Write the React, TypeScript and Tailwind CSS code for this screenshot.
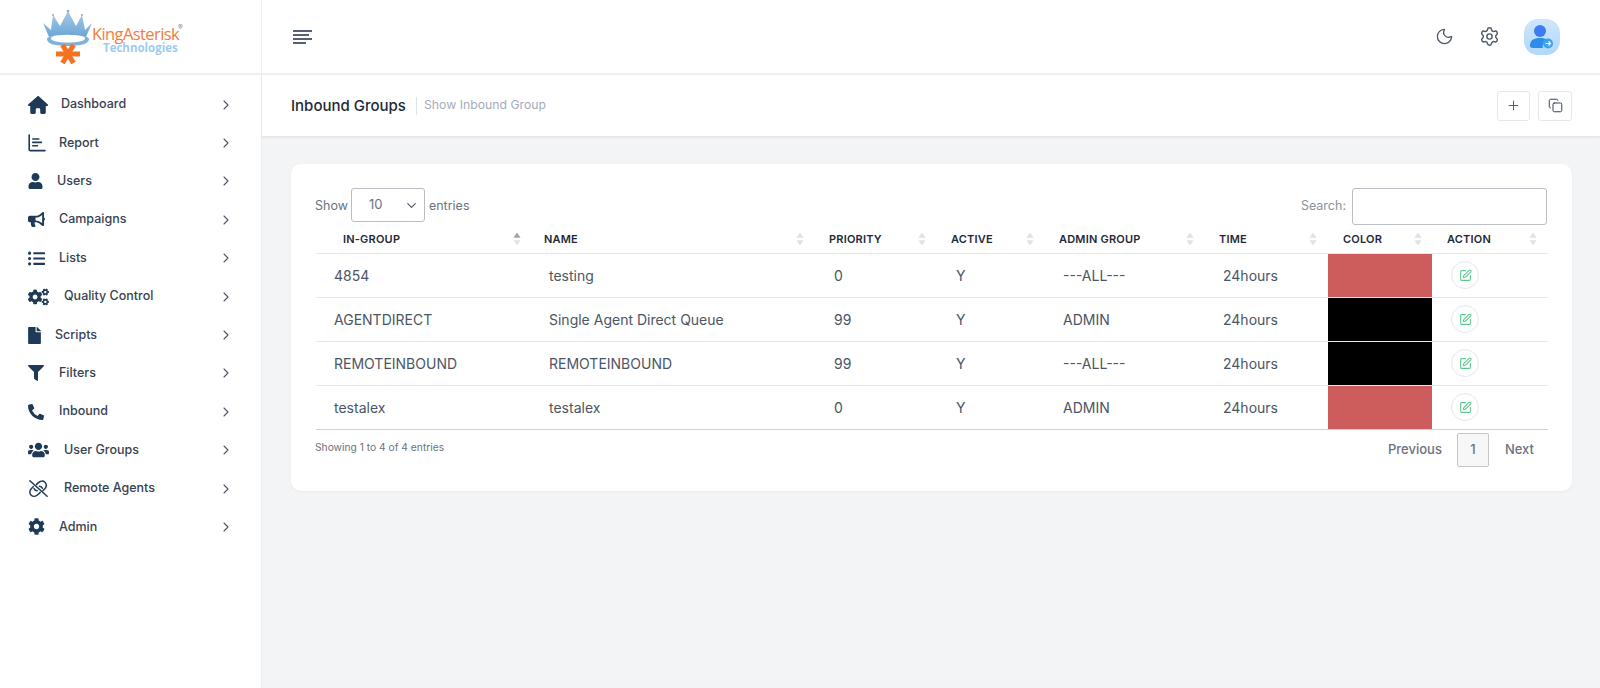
import React from "react";
import { ChevronRight, ChevronDown, Moon, Settings, Plus, Copy, SquarePen } from "lucide-react";
import { FaUser, FaBullhorn, FaListUl, FaCogs, FaFile, FaFilter, FaPhoneAlt, FaUsers, FaCog } from "react-icons/fa";
import { FaHouse } from "react-icons/fa6";

const ReportIcon = ({ className }: { className?: string }) => (
  <svg viewBox="0 0 18 18" className={className} fill="none" stroke="currentColor" strokeWidth="1.6" strokeLinecap="round">
    <path d="M1.2 1v14.6c0 .6.4 1 1 1H17" />
    <path d="M4.8 5h6M4.8 8.4h8.6M4.8 11.8h4.6" />
  </svg>
);

const UnlinkIcon = ({ className }: { className?: string }) => (
  <svg viewBox="0 0 24 22" className={className} fill="none" stroke="currentColor" strokeWidth="1.7" strokeLinecap="round">
    <path d="M2 2l20 18" />
    <path d="M9.5 6.5l2-2c2.4-2.4 5.8-2.8 8-.8s2 5.4-.4 7.8l-2 2" />
    <path d="M13 8.5c1.6 0 3 1 3.6 2.4" />
    <path d="M14 15.5l-2.5 2.5c-2.4 2.4-5.8 2.8-8 .8s-2-5.4.4-7.8l2.2-2.2" />
    <path d="M10.5 13.5c-1.6 0-3-1-3.6-2.4" />
  </svg>
);

const items = [
  { label: "Dashboard", Icon: FaHouse, icon: "w-[20px] h-[18px]", w: "w-[33px]" },
  { label: "Report", Icon: ReportIcon, icon: "w-[18px] h-[18px]", w: "w-[31px]" },
  { label: "Users", Icon: FaUser, icon: "w-[15px] h-[16px]", w: "w-[29px]" },
  { label: "Campaigns", Icon: FaBullhorn, icon: "w-[17px] h-[17px]", w: "w-[31px]" },
  { label: "Lists", Icon: FaListUl, icon: "w-[17px] h-[17px]", w: "w-[31px]" },
  { label: "Quality Control", Icon: FaCogs, icon: "w-[21px] h-[18px]", w: "w-[36px]" },
  { label: "Scripts", Icon: FaFile, icon: "w-[13px] h-[17px]", w: "w-[27px]" },
  { label: "Filters", Icon: FaFilter, icon: "w-[16px] h-[16px]", w: "w-[31px]" },
  { label: "Inbound", Icon: FaPhoneAlt, icon: "w-[16px] h-[16px]", w: "w-[31px]" },
  { label: "User Groups", Icon: FaUsers, icon: "w-[21px] h-[18px]", w: "w-[36px]" },
  { label: "Remote Agents", Icon: UnlinkIcon, icon: "w-[21px] h-[19px]", w: "w-[36px]" },
  { label: "Admin", Icon: FaCog, icon: "w-[17px] h-[17px]", w: "w-[31px]" },
];

const Sort = ({ active }: { active?: boolean }) => (
  <svg viewBox="0 0 8 14" className="w-[8px] h-[14px] shrink-0">
    <path d="M4 0.5l3.6 5.2H0.4z" fill={active ? "#9ca3af" : "#dfe2e6"} />
    <path d="M4 13.5l3.6-5.2H0.4z" fill="#dfe2e6" />
  </svg>
);

const headers = [
  { t: "IN-GROUP", c: "pl-[27px] pr-[9px]", active: true },
  { t: "NAME", c: "pl-[14px] pr-[11px]" },
  { t: "PRIORITY", c: "pl-[14px] pr-[11px]" },
  { t: "ACTIVE", c: "pl-[14px] pr-[11px]" },
  { t: "ADMIN GROUP", c: "pl-[14px] pr-[11px]" },
  { t: "TIME", c: "pl-[14px] pr-[11px]" },
  { t: "COLOR", c: "pl-[15px] pr-[10px]" },
  { t: "ACTION", c: "pl-[15px] pr-[11px]" },
];

const rows = [
  ["4854", "testing", "0", "Y", "---ALL---", "24hours", "bg-[#cd5c5c]"],
  ["AGENTDIRECT", "Single Agent Direct Queue", "99", "Y", "ADMIN", "24hours", "bg-black"],
  ["REMOTEINBOUND", "REMOTEINBOUND", "99", "Y", "---ALL---", "24hours", "bg-black"],
  ["testalex", "testalex", "0", "Y", "ADMIN", "24hours", "bg-[#cd5c5c]"],
];

export default function App() {
  return (
    <div className="flex min-h-[688px] h-[688px] w-full overflow-hidden bg-[#f3f4f6] text-[#4b5563] font-['Inter',sans-serif]">
      <aside className="w-[262px] shrink-0 bg-white border-r border-[#eceef1] flex flex-col">
        <div className="h-[75px] shrink-0 border-b-2 border-[#eef0f2] flex items-start pl-[43px] pt-[10px]">
          <svg viewBox="0 0 50 54" className="w-[50px] h-[54px] shrink-0">
            <defs>
              <linearGradient id="cr" x1="0" y1="0" x2="0" y2="1">
                <stop offset="0" stopColor="#a9cbe6" />
                <stop offset="1" stopColor="#6aa6d6" />
              </linearGradient>
            </defs>
            <path d="M0 13l8 7 2-15 7 11 8-15 8 15 6-11 3 15 7-7-6 14c-11-3-27-3-37 0z" fill="url(#cr)" />
            <circle cx="25" cy="1" r="1.4" fill="#7fb1d9" />
            <circle cx="10" cy="5" r="1" fill="#7fb1d9" />
            <circle cx="39" cy="5" r="1" fill="#7fb1d9" />
            <path d="M4 29c0 5 9 7 21 7s21-2 21-7c0-2-4-3-7-3 2 .6 3 1.400 3 2.400 0 2.600-8 4-17 4s-17-1.400-17-4c0-1 1-1.800 3-2.400-3 0-7 1-7 3z" fill="#7fb1d9" />
            <g stroke="#f4711f" strokeWidth="5">
              <path d="M13 44h24" />
              <path d="M19.500 35l11 18" />
              <path d="M30.500 35l-11 18" />
            </g>
          </svg>
          <div className="flex flex-col mt-[15px] -ml-[1px] w-[92px] leading-none">
            <div className="flex items-start">
              <span className="text-[16.5px] leading-[18px] font-medium text-[#f47c3c] tracking-[-0.6px] whitespace-nowrap font-['Open_Sans',sans-serif]">KingAsterisk</span>
              <span className="text-[7px] leading-[8px] text-[#888] -ml-[1px] -mt-[1px]">®</span>
            </div>
            <span className="text-[11.5px] leading-[12px] font-bold text-[#9ccbef] pl-[11px] -mt-[1px] whitespace-nowrap font-['Open_Sans',sans-serif]">Technologies</span>
          </div>
        </div>
        <nav className="pt-[10.5px] flex flex-col">
          {items.map(({ label, Icon, icon, w }) => (
            <div key={label} className="h-[38.4px] pl-[28px] pr-[27px] flex items-center text-[12.5px] font-medium text-[#374151]">
              <span className={`${w} shrink-0 flex items-center`}>
                <Icon className={`${icon} text-[#1e3a56]`} />
              </span>
              <span className="flex-1">{label}</span>
              <ChevronRight className="w-[16px] h-[16px] text-[#4b5563]" strokeWidth={1.6} />
            </div>
          ))}
        </nav>
      </aside>

      <main className="flex-1 min-w-0 flex flex-col">
        <header className="h-[75px] shrink-0 bg-white border-b-2 border-[#eef0f2] flex items-center pl-[31px] pr-[40px]">
          <svg viewBox="0 0 19 14" className="w-[19px] h-[14px] text-[#1f2f44]" stroke="currentColor" strokeWidth="1.5">
            <path d="M0 1h19M0 5h16M0 9h19M0 13h13" />
          </svg>
          <div className="ml-auto flex items-center">
            <Moon className="w-[19px] h-[19px] text-[#4b5563]" strokeWidth={1.6} />
            <Settings className="w-[21px] h-[21px] text-[#4b5563] ml-[25px]" strokeWidth={1.6} />
            <div className="w-[36px] h-[36px] ml-[24px] rounded-[14px] bg-gradient-to-b from-[#cfe6fc] to-[#b0d8fa] flex items-center justify-center">
              <svg viewBox="0 0 28 28" className="w-[28px] h-[28px]">
                <circle cx="12" cy="8" r="6" fill="#3b7bf5" />
                <path d="M2 23c0-6 4-8 10-8 3 0 5 .6 7 2-3 1-5 4-4 8H5c-2 0-3-1-3-2z" fill="#2f8be8" />
                <circle cx="20" cy="20.500" r="5" fill="#3ba3f0" />
                <path d="M17.500 20.500h5M20.500 18.500l2 2-2 2" stroke="#fff" strokeWidth="1.2" fill="none" />
              </svg>
            </div>
          </div>
        </header>

        <div className="h-[62px] shrink-0 bg-white border-b border-[#e5e7eb] shadow-[0_1px_2px_rgba(0,0,0,0.06)] flex items-center pl-[29px] pr-[28px]">
          <h1 className="text-[15px] font-medium text-[#1f2937] leading-none">Inbound Groups</h1>
          <span className="w-px h-[18px] bg-[#dfe2e6] ml-[10px]" />
          <span className="ml-[7px] text-[12.25px] text-[#a5abbd]">Show Inbound Group</span>
          <div className="ml-auto flex items-center gap-[8px]">
            <button className="w-[33px] h-[30px] bg-white border border-[#e5e7eb] rounded-[3px] flex items-center justify-center">
              <Plus className="w-[15px] h-[15px] text-[#4b5563]" strokeWidth={1.5} />
            </button>
            <button className="w-[34px] h-[30px] bg-white border border-[#e5e7eb] rounded-[3px] flex items-center justify-center">
              <Copy className="w-[15px] h-[15px] text-[#374151]" strokeWidth={1.6} />
            </button>
          </div>
        </div>

        <div className="pt-[27px] pl-[29px] pr-[28px]">
          <section className="bg-white rounded-[10px] shadow-[0_1px_3px_rgba(0,0,0,0.05)] px-[25px] pt-[24px] pb-[24px]">
            <div className="h-[36px] flex items-start justify-between text-[12.5px] text-[#6b7280]">
              <div className="flex items-center h-[34px] -ml-[1px]">
                <span className="mt-[2px]">Show</span>
                <div className="w-[74px] h-[34px] ml-[3px] mr-[4px] border border-[#b9bdc4] rounded-[3px] flex items-center pl-[17px] pr-[5px] text-[#6b7280]">
                  <span className="flex-1 text-[13px]">10</span>
                  <ChevronDown className="w-[15px] h-[15px] text-[#4b5563]" strokeWidth={1.8} />
                </div>
                <span className="mt-[2px]">entries</span>
              </div>
              <div className="flex items-center h-[37px]">
                <span className="text-[#8b929c] mr-[6px]">Search:</span>
                <div className="w-[195px] h-[37px] border border-[#b9bdc4] rounded-[3px]" />
              </div>
            </div>
            <table className="w-full table-fixed border-collapse">
              <colgroup>
                <col className="w-[214px]" />
                <col className="w-[285px]" />
                <col className="w-[122px]" />
                <col className="w-[108px]" />
                <col className="w-[160px]" />
                <col className="w-[123px]" />
                <col className="w-[104px]" />
                <col className="w-[116px]" />
              </colgroup>
              <thead>
                <tr className="h-[29px] border-b border-[#e5e7eb]">
                  {headers.map((h) => (
                    <th key={h.t} className={`${h.c} p-0 font-semibold text-left`}>
                      <div className="flex items-center justify-between pt-[1px] text-[11px] text-[#1f2937] tracking-[0.2px]">
                        <span>{h.t}</span>
                        <Sort active={h.active} />
                      </div>
                    </th>
                  ))}
                </tr>
              </thead>
              <tbody>
                {rows.map((r, i) => (
                  <tr key={i} className={`h-[44px] border-b text-[14px] text-[#4b5563] ${i === 3 ? "border-[#cfd2d6]" : "border-[#e5e7eb]"}`}>
                    {r.slice(0, 6).map((v, j) => (
                      <td key={j} className={`${j === 0 || j >= 4 ? "pl-[18px]" : "pl-[19px]"} p-0 whitespace-nowrap`}>{v}</td>
                    ))}
                    <td className={`${r[6]} p-0`} />
                    <td className="pl-[19px] p-0">
                      <span className="w-[28px] h-[28px] rounded-full border border-[#e5e7eb] flex items-center justify-center">
                        <SquarePen className="w-[13px] h-[13px] text-[#5cc98e]" strokeWidth={2} />
                      </span>
                    </td>
                  </tr>
                ))}
              </tbody>
            </table>
            <div className="flex items-start justify-between pt-[3px]">
              <span className="text-[10.25px] text-[#6b7280] mt-[7px] -ml-[1px]">Showing 1 to 4 of 4 entries</span>
              <div className="flex items-center text-[13px] font-medium text-[#6b7280]">
                <span>Previous</span>
                <span className="w-[32px] h-[34px] ml-[15px] mr-[16px] bg-[#f7f7f7] border border-[#c4c7cc] rounded-[2px] flex items-center justify-center">1</span>
                <span className="mr-[13px]">Next</span>
              </div>
            </div>
          </section>
        </div>
      </main>
    </div>
  );
}
